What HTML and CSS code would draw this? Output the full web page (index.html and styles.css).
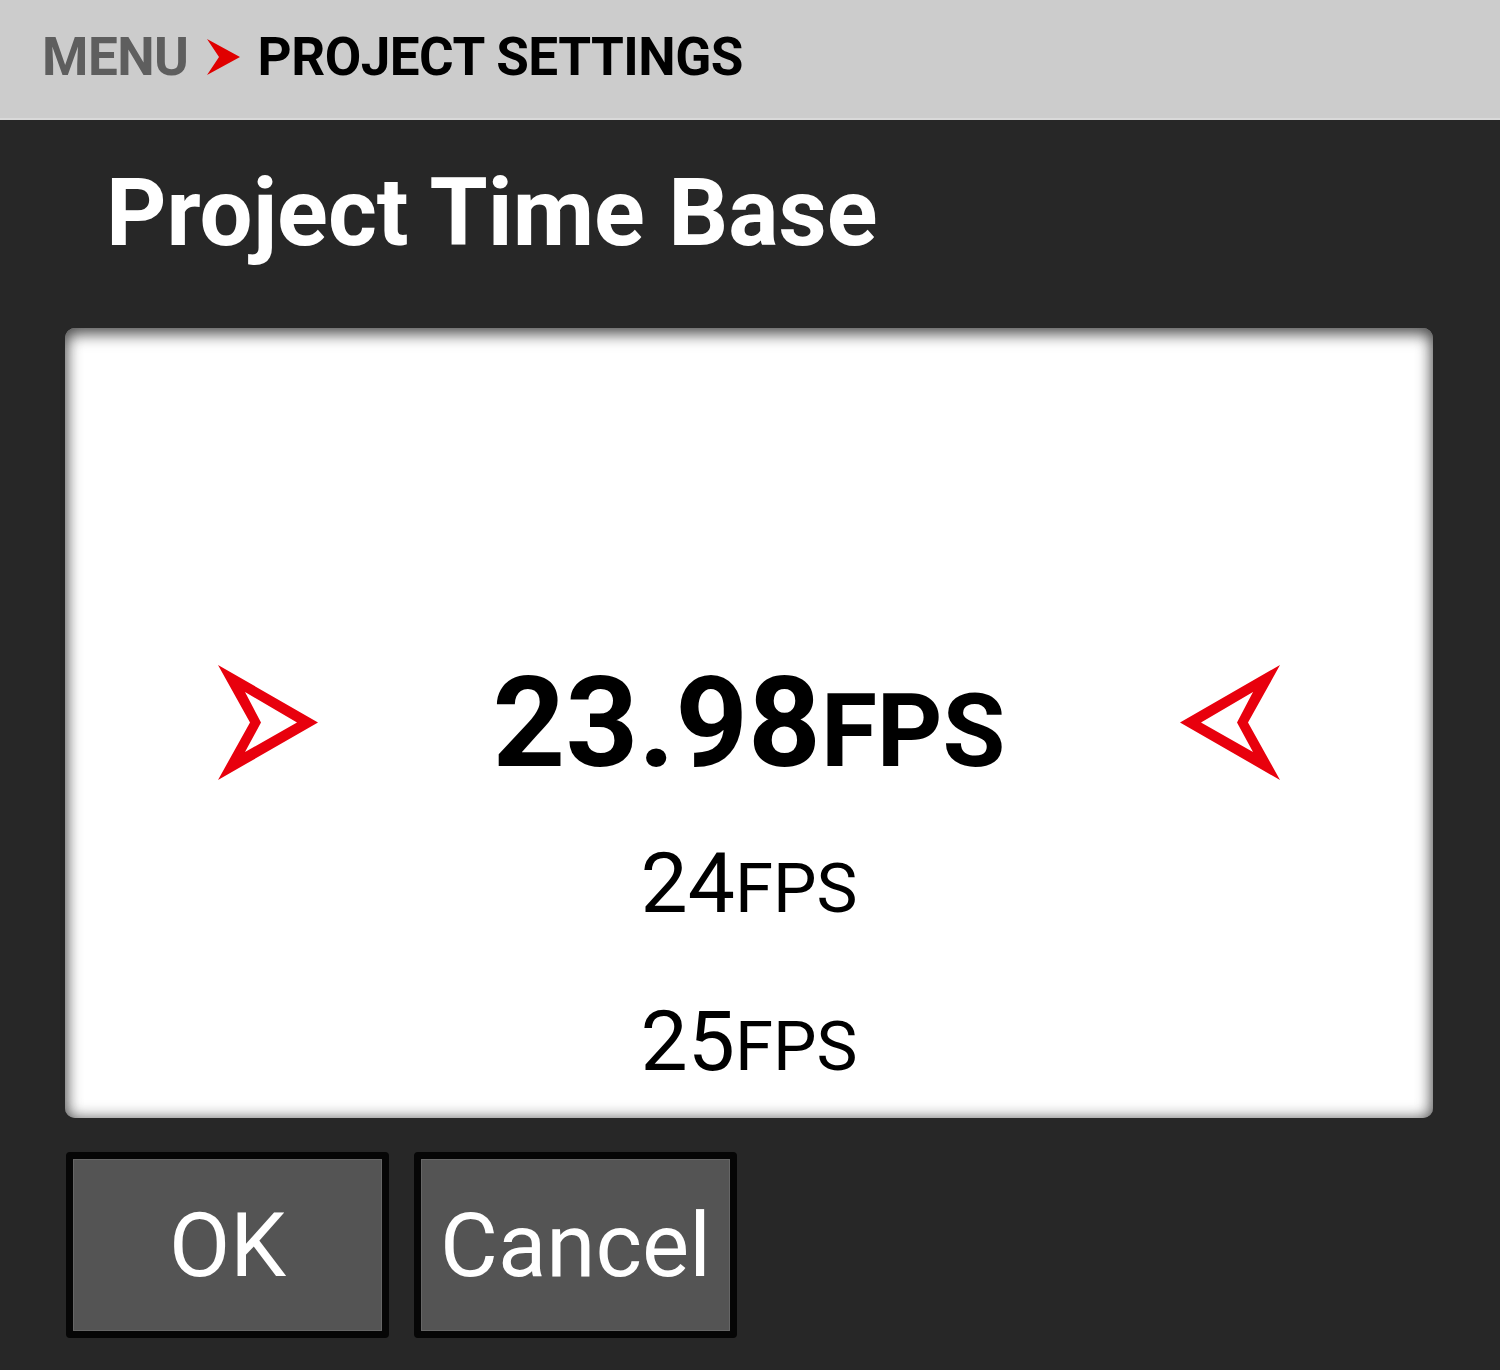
FILE: index.html
```html
<!DOCTYPE html>
<html lang="en">
<head>
    <meta charset="UTF-8">
    <meta name="viewport" content="width=device-width, initial-scale=1.0">
    <title>Project Time Base</title>
    <link rel="stylesheet" href="styles.css">
</head>
<body>
    <div class="topbar">
        <span class="crumb">MENU</span>
        <svg class="crumb-arrow" width="33" height="36" viewBox="0 0 33 36">
            <polygon points="0,0 33,18 0,36 12,18" fill="#e00000"/>
        </svg>
        <span class="crumb current">PROJECT SETTINGS</span>
    </div>

    <h1 class="title">Project Time Base</h1>

    <div class="picker">
        <div class="option selected">
            <svg class="pointer" width="101" height="116" viewBox="0 0 101 116">
                <path fill-rule="evenodd" fill="#e8000d" d="M0,0 L100,57.5 L0,115 L32,57.5 Z M27,27 L79,57.5 L27,87 L43,57.5 Z"/>
            </svg>
            <span class="value"><b>23.98</b><small>FPS</small></span>
            <svg class="pointer" width="101" height="116" viewBox="0 0 101 116">
                <path fill-rule="evenodd" fill="#e8000d" transform="translate(101,0) scale(-1,1)" d="M0,0 L100,57.5 L0,115 L32,57.5 Z M27,27 L79,57.5 L27,87 L43,57.5 Z"/>
            </svg>
        </div>
        <div class="option"><span class="num">24</span><small>FPS</small></div>
        <div class="option"><span class="num">25</span><small>FPS</small></div>
    </div>

    <div class="actions">
        <button class="btn">OK</button>
        <button class="btn">Cancel</button>
    </div>
</body>
</html>
```

FILE: styles.css
```css
body {
    font-family: Roboto, "Liberation Sans", sans-serif;
    background-color: #272727;
    margin: 0;
    padding: 0;
}
.topbar {
    display: flex;
    align-items: center;
    gap: 18px;
    height: 113px;
    padding: 0 0 5px 42px;
    background-color: #cccccc;
    border-bottom: 2px solid #d9d9d9;
}
.crumb {
    font-size: 53px;
    font-weight: 700;
    color: #5e5e5e;
    letter-spacing: -0.5px;
}
.crumb.current {
    color: #000;
}
.title {
    margin: 38px 0 0 106px;
    font-size: 94px;
    font-weight: 700;
    line-height: normal;
    color: #fff;
}
.picker {
    display: flex;
    flex-direction: column;
    justify-content: flex-end;
    box-sizing: border-box;
    width: 1368px;
    height: 790px;
    margin: 60px 0 0 65px;
    background-color: #fff;
    border-radius: 10px;
    box-shadow: inset 0 6px 16px rgba(0, 0, 0, 0.55), inset 0 0 16px rgba(0, 0, 0, 0.45);
}
.option {
    height: 158px;
    line-height: 158px;
    text-align: center;
    color: #000;
    font-size: 84px;
}
.option small {
    font-size: 69px;
}
.option .num, .option small {
    position: relative;
    top: 3px;
}
.option.selected {
    display: flex;
    align-items: center;
    justify-content: space-between;
    padding: 0 153px;
}
.value {
    position: relative;
    top: 7px;
}
.value b {
    font-size: 127px;
    font-weight: 700;
}
.value small {
    font-size: 102px;
    font-weight: 700;
    top: 0;
}
.pointer {
    display: block;
}
.actions {
    display: flex;
    gap: 25px;
    margin: 34px 0 0 66px;
}
.btn {
    width: 323px;
    height: 186px;
    padding: 0;
    border: 7px solid #060606;
    border-radius: 4px;
    background-color: #545454;
    box-shadow: inset 0 0 0 1px #666;
    color: #fff;
    font-family: Roboto, "Liberation Sans", sans-serif;
    font-size: 89px;
    cursor: pointer;
}
```
